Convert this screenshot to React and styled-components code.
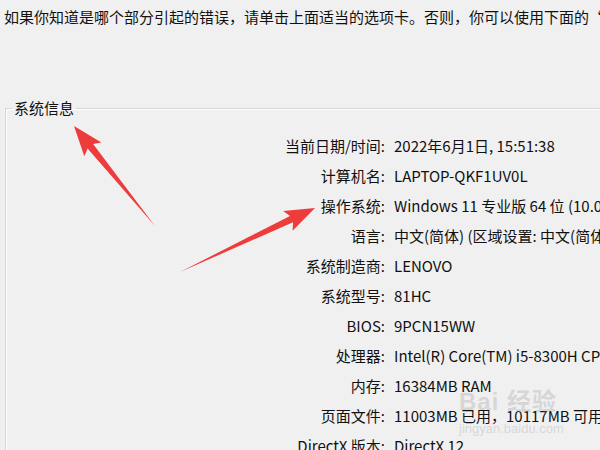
import React from 'react';
import styled, { createGlobalStyle } from 'styled-components';

const Global = createGlobalStyle`
  html, body {
    margin: 0;
    padding: 0;
    background: #f0f0f0;
  }
  body {
    font-family: "Noto Sans CJK SC", "Noto Sans", sans-serif;
    color: #111111;
  }
`;

const Page = styled.div`
  position: relative;
  width: 600px;
  height: 450px;
  overflow: hidden;
  background: #f0f0f0;
`;

const Intro = styled.p`
  margin: 0;
  padding: 7px 0 0 4px;
  font-size: 15px;
  line-height: 20px;
  white-space: nowrap;
`;

const Group = styled.fieldset`
  margin: 71px 0 0 5px;
  padding: 12px 0 0 0;
  border: none;
  border-top: 1px solid #d6d6d6;
  border-left: 1px solid #d6d6d6;
  box-shadow: inset 1px 1px 0 #ffffff;
  min-width: 0;
`;

const Legend = styled.legend`
  margin-left: 6px;
  padding: 0 2px 0 2px;
  font-size: 15px;
  line-height: 20px;
`;

const Rows = styled.div`
  display: grid;
  grid-template-columns: 379px 1fr;
  column-gap: 9px;
  grid-auto-rows: 30px;
  align-items: center;
  font-size: 15px;
  white-space: nowrap;
`;

const Label = styled.span`
  text-align: right;
`;

const Value = styled.span`
  overflow: hidden;
`;

const Overlay = styled.svg`
  position: absolute;
  left: 0;
  top: 0;
  pointer-events: none;
`;

const Watermark = styled.div`
  position: absolute;
  left: 459px;
  top: 388px;
  display: flex;
  flex-direction: column;
  align-items: flex-start;
  color: rgba(165, 165, 165, 0.35);
  font-family: "Liberation Sans", "Noto Sans CJK SC", sans-serif;
  pointer-events: none;
`;

const MarkLogo = styled.span`
  font-size: 24px;
  font-weight: bold;
  line-height: 28px;
  letter-spacing: 1px;
`;

const MarkUrl = styled.span`
  font-size: 13px;
  line-height: 16px;
  margin-top: 5px;
`;

const info = [
  ['当前日期/时间:', '2022年6月1日, 15:51:38'],
  ['计算机名:', 'LAPTOP-QKF1UV0L'],
  ['操作系统:', 'Windows 11 专业版 64 位 (10.0, 内部版本 22000)'],
  ['语言:', '中文(简体) (区域设置: 中文(简体))'],
  ['系统制造商:', 'LENOVO'],
  ['系统型号:', '81HC'],
  ['BIOS:', '9PCN15WW'],
  ['处理器:', 'Intel(R) Core(TM) i5-8300H CPU @ 2.30GHz (8 CPUs), ~2.3GHz'],
  ['内存:', '16384MB RAM'],
  ['页面文件:', '11003MB 已用，10117MB 可用'],
  ['DirectX 版本:', 'DirectX 12'],
];

function Arrow({ x1, y1, x2, y2 }) {
  // tail (x1,y1) -> tip (x2,y2), tapered shaft with a wide head
  const dx = x2 - x1;
  const dy = y2 - y1;
  const len = Math.hypot(dx, dy);
  const ux = dx / len;
  const uy = dy / len;
  const nx = -uy;
  const ny = ux;
  const head = 26;
  const bx = x2 - ux * head;
  const by = y2 - uy * head;
  const pt = (x, y) => `${x.toFixed(1)},${y.toFixed(1)}`;
  const pts = [
    pt(x1, y1),
    pt(bx + nx * 3.5, by + ny * 3.5),
    pt(bx - ux * 4 + nx * 11, by - uy * 4 + ny * 11),
    pt(x2, y2),
    pt(bx - ux * 4 - nx * 11, by - uy * 4 - ny * 11),
    pt(bx - nx * 3.5, by - ny * 3.5),
  ];
  return <polygon points={pts.join(' ')} fill="#ee3b3b" />;
}

export default function App() {
  return (
    <Page>
      <Global />
      <Intro>如果你知道是哪个部分引起的错误，请单击上面适当的选项卡。否则，你可以使用下面的“下一页”按钮按顺序查看每一页。</Intro>
      <Group>
        <Legend>系统信息</Legend>
        <Rows>
          {info.map(([k, v]) => (
            <React.Fragment key={k}>
              <Label>{k}</Label>
              <Value>{v}</Value>
            </React.Fragment>
          ))}
        </Rows>
      </Group>
      <Overlay width="600" height="450">
        <Arrow x1={155} y1={226} x2={74} y2={126} />
        <Arrow x1={180} y1={272} x2={315} y2={208} />
      </Overlay>
      <Watermark>
        <MarkLogo>Bai 经验</MarkLogo>
        <MarkUrl>jingyan.baidu.com</MarkUrl>
      </Watermark>
    </Page>
  );
}
